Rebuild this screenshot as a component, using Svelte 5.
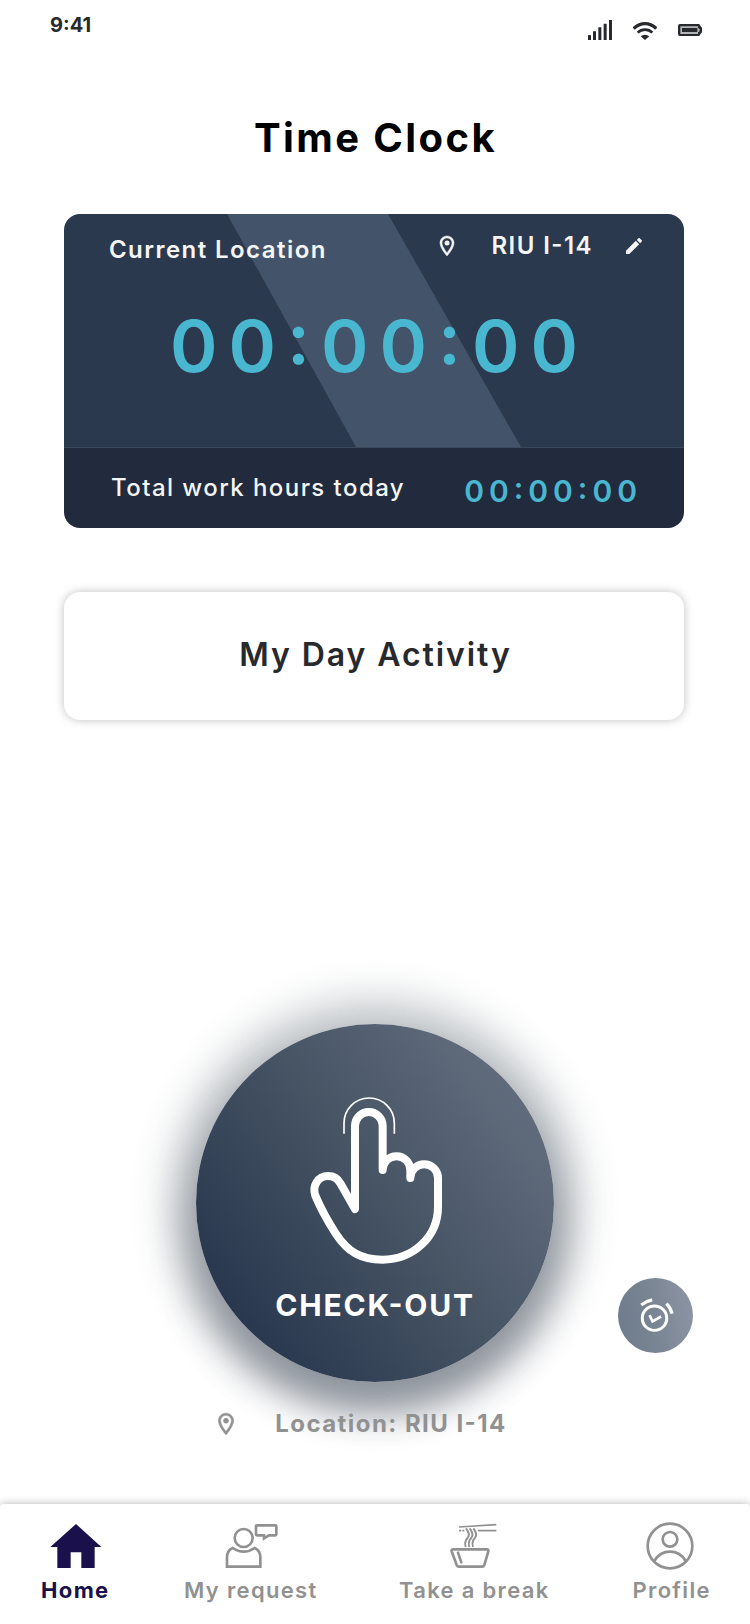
<script>
  let worked = $state('00:00:00');
  let total = $state('00:00:00');
  let place = $state('RIU I-14');
</script>

{#snippet pin()}
  <svg class="pin" viewBox="0 0 24 24" fill="currentColor" aria-hidden="true">
    <path d="M12 2C8.130 2 5 5.130 5 9c0 5.250 7 13 7 13s7-7.750 7-13c0-3.870-3.130-7-7-7zM7 9c0-2.760 2.240-5 5-5s5 2.240 5 5c0 2.880-2.880 7.190-5 9.880C9.920 16.210 7 11.850 7 9z" stroke="currentColor" stroke-width="0.5" />
    <circle cx="12" cy="9" r="2.5" />
  </svg>
{/snippet}

<div class="screen">
  <header class="status">
    <span class="clock">9:41</span>
    <div class="signals">
      <svg viewBox="54 45 72 60" fill="currentColor" aria-hidden="true">
        <path d="M54 92q0-2 2-2h5q2 0 2 2v13h-9zM69 79h9v26h-9zM85 67h9v38h-9zM101 56h9v49h-9zM117 45h9v60h-9z" />
      </svg>
      <svg viewBox="188 45 72 60" fill="none" stroke="currentColor" aria-hidden="true">
        <path d="M190 71Q205 56 224 56T258 71" stroke-width="10" />
        <path d="M202 83Q211 74 224 74T246 83" stroke-width="8" />
        <path d="M211 94Q224 84 237 94L224 105z" fill="currentColor" stroke="none" />
      </svg>
      <svg viewBox="324 45 72 60" aria-hidden="true">
        <path d="M330 57h56q4 0 5 5l5 6v14l-5 6q-1 5-5 5h-56q-6 0-6-6V63q0-6 6-6z" fill="currentColor" />
        <path d="M331 64h53v5l5 3v7l-5 3v5h-53z" fill="#b4b6b7" />
        <path d="M336 69h46v12h-46z" fill="currentColor" />
      </svg>
    </div>
  </header>

  <main>
    <h1>Time Clock</h1>

    <section class="card">
      <div class="card-main">
        <svg class="stripe" viewBox="0 0 620 234" preserveAspectRatio="none" aria-hidden="true">
          <path d="M163 0H324L457 234H292z" fill="#42536a" />
        </svg>
        <div class="card-head">
          <span class="label">Current Location</span>
          <div class="place">
            {@render pin()}
            <span>{place}</span>
            <button class="edit" aria-label="Edit location">
              <svg viewBox="3 3 18 18" fill="currentColor" aria-hidden="true">
                <path d="M3 17.250V21h3.750L17.810 9.940l-3.750-3.750L3 17.250zM20.710 7.040a.996.996 0 0 0 0-1.410l-2.340-2.340a.996.996 0 0 0-1.410 0l-1.830 1.830 3.750 3.750 1.830-1.830z" />
              </svg>
            </button>
          </div>
        </div>
        <div class="timer">{worked}</div>
      </div>
      <div class="card-foot">
        <span class="total-label">Total work hours today</span>
        <span class="total">{total}</span>
      </div>
    </section>

    <button class="activity">My Day Activity</button>

    <section class="action">
      <button class="punch">
        <svg viewBox="45 48 420 516" fill="none" stroke="#fff" aria-hidden="true">
          <path d="M162 161V129.500A75.500 75.500 0 0 1 313 129.500V161" stroke-width="5" />
          <path d="M195 387V137.500A41.500 41.500 0 0 1 278 137.500V270A41.500 41.500 0 0 1 361 270V294A41.500 41.500 0 0 1 444 294V380C444 470 370 539 277 539C212 539 174 516 138 462C112 422 92 385 76 347C66 318 84 288 114 288C132 288 144 297 151 310L195 387Z" stroke-width="24" stroke-linejoin="round" />
        </svg>
        <span>CHECK-OUT</span>
      </button>
      <p class="where">
        {@render pin()}
        <span>Location: {place}</span>
      </p>
      <button class="alarm" aria-label="Reminders">
        <svg viewBox="112 112 112 112" fill="none" stroke="#fff" aria-hidden="true">
          <circle cx="165" cy="176" r="37" stroke-width="9" />
          <path d="M150 167L159 186L185 171" stroke-width="8" />
          <path d="M125 136Q139 125 158 121M201 132Q214 145 218 162" stroke-width="10" />
        </svg>
      </button>
    </section>
  </main>

  <nav>
    <a class="current" href="#home" aria-current="page">
      <svg viewBox="150 96 156 144" fill="currentColor" aria-hidden="true">
        <path d="M228 102L304 171H284V234H244V187H212V234H172V171H151Z" />
      </svg>
      Home
    </a>
    <a href="#request">
      <svg viewBox="676 96 156 144" fill="none" stroke="currentColor" stroke-width="8" aria-hidden="true">
        <circle cx="732" cy="144" r="27" />
        <path d="M682 230V202Q682 182 699 174Q732 196 765 174Q782 182 782 202V230Z" />
        <path d="M772 106H827Q830 106 830 109V133Q830 136 827 136H808L793 145V136H772Q769 136 769 133V109Q769 106 772 106Z" />
      </svg>
      My request
    </a>
    <a href="#break">
      <svg viewBox="222 96 156 144" fill="none" stroke="currentColor" aria-hidden="true">
        <path d="M235 178H335Q342 178 340 184L328 225Q326 230 321 230H252Q247 230 245 225L230 184Q228 178 235 178Z" stroke-width="8" />
        <path d="M249 188L259 217" stroke-width="8" stroke-linecap="round" />
        <path d="M273 115C288 136 280 141 273 150Q268 160 272 171M284 115C299 136 291 141 284 150Q279 160 283 171M295 115C310 136 302 141 295 150Q290 160 294 171" stroke-width="6" />
        <path d="M252 111L364 104M252 122h7M262 122h6M309 122h55" stroke-width="5" />
      </svg>
      Take a break
    </a>
    <a href="#profile">
      <svg viewBox="813 96 156 144" fill="none" stroke="currentColor" stroke-width="8" aria-hidden="true">
        <circle cx="885" cy="168" r="67" />
        <circle cx="885" cy="148" r="22" />
        <path d="M838 213C849 194 867 185 885 185S921 194 932 213" />
      </svg>
      Profile
    </a>
  </nav>
</div>

<style>
  :global(body) {
    margin: 0;
    background: #fff;
  }
  .screen {
    display: flex;
    flex-direction: column;
    min-height: 100vh;
    font-family: Inter, 'Liberation Sans', sans-serif;
    font-feature-settings: 'calt' 1;
    color: #28292d;
  }
  button {
    border: 0;
    margin: 0;
    padding: 0;
    font: inherit;
    font-feature-settings: inherit;
    color: inherit;
    background: none;
    cursor: pointer;
  }
  svg {
    display: block;
  }
  h1,
  .card-head,
  .total-label,
  .activity,
  .punch,
  .where,
  nav a {
    letter-spacing: 0.06em;
  }
  /* Balances the space that follows the last letter of centred text */
  h1,
  .activity,
  nav a {
    text-indent: 3px;
  }
  .status {
    display: flex;
    justify-content: space-between;
    padding: 12px 48px 0 50px;
  }
  .clock {
    font-size: 20px;
    line-height: 26px;
    font-weight: 700;
  }
  .signals {
    display: flex;
    gap: 21px;
    padding-top: 8px;
  }
  .signals svg {
    width: 24px;
    height: 20px;
  }
  main {
    flex: 1;
    display: flex;
    flex-direction: column;
    padding: 0 66px 0 64px;
  }
  h1 {
    margin: 74px 0 52px;
    font-size: 40px;
    line-height: 48px;
    font-weight: 700;
    text-align: center;
    color: #000;
  }
  .card {
    border-radius: 16px;
    overflow: hidden;
    color: #f5f5f5;
    font-size: 24px;
  }
  .card-main {
    position: relative;
    padding: 18px 42px 57px 45px;
    background: #2b394f;
    border-bottom: 1px solid #3c495c;
  }
  .stripe {
    position: absolute;
    inset: 0;
    width: 100%;
    height: 100%;
  }
  .card-head {
    position: relative;
    display: flex;
    justify-content: space-between;
    align-items: flex-start;
    font-weight: 600;
  }
  .label {
    line-height: 36px;
  }
  .place {
    display: flex;
    align-items: center;
    gap: 33px;
    line-height: 28px;
  }
  .pin {
    width: 24px;
    height: 24px;
  }
  .edit svg {
    width: 16px;
    height: 16px;
  }
  .timer {
    position: relative;
    margin-top: 34px;
    font-size: 72px;
    line-height: 88px;
    font-weight: 600;
    letter-spacing: 11px;
    text-indent: 8px;
    text-align: center;
    color: #4ab7d0;
  }
  .card-foot {
    display: flex;
    justify-content: space-between;
    align-items: flex-start;
    padding: 26px 42px 20px 47px;
    background: #212b3d;
  }
  .total-label {
    line-height: 28px;
    font-weight: 500;
  }
  .total {
    font-size: 30px;
    line-height: 34px;
    font-weight: 600;
    letter-spacing: 5px;
    color: #4ab7d0;
  }
  .activity {
    margin-top: 64px;
    padding: 43px 0 45px;
    border-radius: 16px;
    background: #fff;
    box-shadow: 0 0 10px rgba(0, 0, 0, 0.25);
    font-size: 32px;
    line-height: 40px;
    font-weight: 600;
  }
  .action {
    position: relative;
    display: flex;
    flex-direction: column;
    align-items: center;
    margin-top: auto;
    padding: 0 0 66px 2px;
  }
  .punch {
    display: flex;
    flex-direction: column;
    align-items: center;
    gap: 19px;
    box-sizing: border-box;
    width: 358px;
    height: 358px;
    padding-top: 72px;
    border-radius: 50%;
    background: linear-gradient(54deg, #27364d 12%, #465464 52%, #5d6879 80%, #657182);
    box-shadow:
      0 0 36px 29px rgba(60, 75, 85, 0.24),
      0 22px 36px 8px rgba(38, 44, 66, 0.4);
    color: #fff;
    font-size: 30px;
    line-height: 36px;
    font-weight: 700;
  }
  .punch svg {
    width: 140px;
    height: 172px;
  }
  .where {
    position: relative;
    display: flex;
    align-items: center;
    gap: 36px;
    margin: 28px 0 0;
    padding-right: 30px;
    color: #919191;
    font-size: 24px;
    line-height: 28px;
    font-weight: 700;
  }
  .where .pin {
    width: 26px;
    height: 26px;
  }
  .alarm {
    position: absolute;
    right: -9px;
    bottom: 151px;
    display: grid;
    place-items: center;
    width: 75px;
    height: 75px;
    border-radius: 50%;
    background: linear-gradient(80deg, #6f7d8c 10%, #7b8694 50%, #8e96a6);
  }
  .alarm svg {
    width: 37px;
    height: 37px;
  }
  nav {
    display: grid;
    grid-template-columns: 37fr 51fr 61fr 38fr;
    padding: 18px 4px 20px 0;
    background: #fff;
    border-radius: 4px 4px 0 0;
    box-shadow: 0 0 8px rgba(0, 0, 0, 0.3);
  }
  nav a {
    display: flex;
    flex-direction: column;
    align-items: center;
    gap: 6px;
    color: #919191;
    font-size: 22px;
    line-height: 28px;
    font-weight: 600;
    text-decoration: none;
    white-space: nowrap;
  }
  nav svg {
    width: 52px;
    height: 48px;
    padding-left: 4px;
    overflow: visible;
  }
  nav .current {
    color: #1a104c;
    font-weight: 700;
  }
</style>
